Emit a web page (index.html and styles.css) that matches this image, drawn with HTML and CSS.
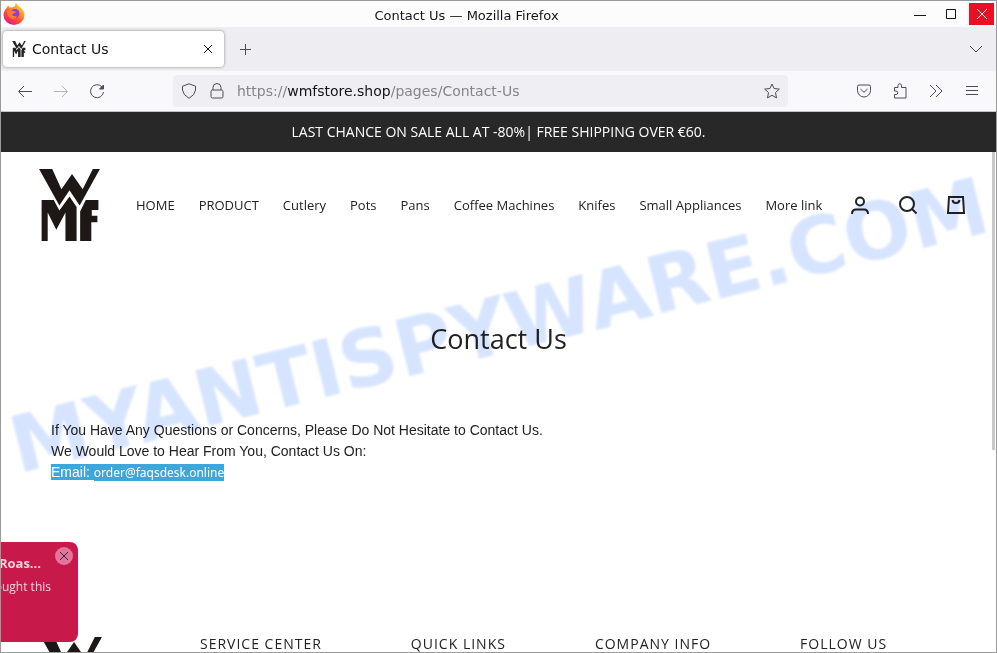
FILE: index.html
```html
<!DOCTYPE html>
<html lang="en">
<head>
<meta charset="UTF-8">
<meta name="viewport" content="width=device-width, initial-scale=1.0">
<title>Contact Us</title>
<link rel="stylesheet" href="styles.css">
</head>
<body>
    <svg width="0" height="0" class="sprite" aria-hidden="true">
        <symbol id="wmf" viewBox="0 0 60 71">
            <path d="M0 0H13L22 20 32.500 5 43 20 53 0H60L40 36 30 21 20 36Z"/>
            <path d="M2.500 30.500H14.500L20 41 30 27 37 37.500V71H26V43L17 60 8.500 43V71H2.500Z"/>
            <path d="M40.500 42L46 30.500H58.500V40.500H52V46H57.500V52.500H51.500V71H40.500Z"/>
        </symbol>
    </svg>

    <div class="titlebar">
        <svg class="firefox" viewBox="0 0 22 22">
            <defs>
                <linearGradient id="flame" x1="1" y1="0" x2="0.3" y2="1">
                    <stop offset="0" stop-color="#fff04a"/>
                    <stop offset="0.35" stop-color="#ffa52a"/>
                    <stop offset="0.7" stop-color="#ff4a3c"/>
                    <stop offset="1" stop-color="#e31587"/>
                </linearGradient>
            </defs>
            <path d="M4 4.500L5 2.500 6.500 4.500Q8 4 9 4.500L12 3Q12 1 13 0Q15 3 17.500 4.500Q21.500 8 21.500 12A10.500 10 0 0 1 .5 12Q.5 8 4 4.500Z" fill="url(#flame)"/>
            <circle cx="12" cy="10.500" r="4.500" fill="#8a3fd6"/>
            <path d="M4 8Q7 6 10 8Q13 8 13 9.500Q10 10 9 12Q11 14 14 12.500Q13 16 9 16Q4 14 4 8Z" fill="#ff7a2d"/>
        </svg>
        <span class="window-title">Contact Us — Mozilla Firefox</span>
        <div class="window-buttons">
            <button aria-label="Minimize"><svg viewBox="0 0 14 14"><path d="M1 8.500H13"/></svg></button>
            <button aria-label="Maximize"><svg viewBox="0 0 14 14"><path d="M2.500 2.500H11.500V11.500H2.500Z"/></svg></button>
            <button class="close" aria-label="Close"><svg viewBox="0 0 14 14"><path d="M2 2L12 12M12 2L2 12"/></svg></button>
        </div>
    </div>

    <div class="tabs">
        <div class="tab">
            <svg class="favicon"><use href="#wmf"/></svg>
            <span>Contact Us</span>
            <button aria-label="Close tab"><svg viewBox="0 0 16 16"><path d="M4 4L12 12M12 4L4 12"/></svg></button>
        </div>
        <button class="new-tab" aria-label="New tab"><svg viewBox="0 0 16 16"><path d="M8.500 3V14M3 8.500H14"/></svg></button>
        <button class="all-tabs" aria-label="List all tabs"><svg viewBox="0 0 16 16"><path d="M2 5L8 11L14 5"/></svg></button>
    </div>

    <div class="toolbar">
        <button aria-label="Back"><svg viewBox="0 0 16 16"><path d="M15 8.500H2M7 3L1.500 8.500L7 14"/></svg></button>
        <button class="disabled" aria-label="Forward"><svg viewBox="0 0 16 16"><path d="M1 8.500H14M9 3L14.500 8.500L9 14"/></svg></button>
        <button aria-label="Reload"><svg viewBox="0 0 16 16"><path d="M13 4A6.500 6.500 0 1 0 14.500 9"/><path class="solid" d="M14.500 2V6H10.500Z"/></svg></button>
        <div class="urlbar">
            <svg viewBox="0 0 16 16"><path d="M8 .8L14.500 3.200V7Q14 12 8 15.300Q2 12 1.500 7V3.200Z"/></svg>
            <svg viewBox="0 0 16 16"><path d="M4 7V4.500A4 4 0 0 1 12 4.500V7M3.500 7H12.500Q14 7 14 8.500V13.500Q14 15 12.500 15H3.500Q2 15 2 13.500V8.500Q2 7 3.500 7Z"/></svg>
            <span class="url">https://<b>wmfstore.shop</b>/pages/Contact-Us</span>
            <button aria-label="Bookmark"><svg viewBox="0 0 16 16"><path d="M8 1L10.100 5.500L15.300 6.100L11.500 9.600L12.500 14.900L8 12.300L3.500 14.900L4.500 9.600L.7 6.100L5.900 5.500Z"/></svg></button>
        </div>
        <button aria-label="Pocket"><svg viewBox="0 0 16 16"><path d="M3 2H13Q14.500 2 14.500 3.500V7.500A6.500 6.500 0 0 1 1.500 7.500V3.500Q1.500 2 3 2ZM4.500 6L8 9.300L11.500 6"/></svg></button>
        <button aria-label="Extensions"><svg viewBox="0 0 16 16"><path d="M2.500 4.500H6V2.500A1.700 1.700 0 0 1 9.500 2.500V4.500H14V15H2.500V11.500H4A1.700 1.700 0 0 0 4 8H2.500Z"/></svg></button>
        <button aria-label="More tools"><svg viewBox="0 0 16 16"><path d="M2 2L8 8L2 14M8 2L14 8L8 14"/></svg></button>
        <button aria-label="Menu"><svg viewBox="0 0 16 16"><path d="M2 3.500H14M2 7.500H14M2 11.500H14"/></svg></button>
    </div>

    <div class="viewport">
        <div class="announcement">LAST CHANCE ON SALE ALL AT -80%| FREE SHIPPING OVER €60.</div>

        <header>
            <a href="#" class="logo" aria-label="WMF"><svg><use href="#wmf"/></svg></a>
            <nav>
                <a href="#">HOME</a>
                <a href="#">PRODUCT</a>
                <a href="#">Cutlery</a>
                <a href="#">Pots</a>
                <a href="#">Pans</a>
                <a href="#">Coffee Machines</a>
                <a href="#">Knifes</a>
                <a href="#">Small Appliances</a>
                <a href="#">More link</a>
            </nav>
            <div class="actions">
                <a href="#" aria-label="Account"><svg viewBox="0 0 20 20"><circle cx="10" cy="6.500" r="4"/><path d="M2 19Q2 14.500 6 14.500H14Q18 14.500 18 19"/></svg></a>
                <a href="#" aria-label="Search"><svg viewBox="0 0 20 20"><circle cx="9" cy="9" r="7"/><path d="M14 14L18.500 18.500"/></svg></a>
                <a href="#" aria-label="Cart"><svg viewBox="0 0 20 20"><path d="M3 2H17L18 18H2ZM6.500 5Q7 8 10 8Q13 8 13.500 5"/></svg></a>
            </div>
        </header>

        <main>
            <h1>Contact Us</h1>
            <p>If You Have Any Questions or Concerns, Please Do Not Hesitate to Contact Us.</p>
            <p>We Would Love to Hear From You, Contact Us On:</p>
            <p><span class="selected">Email: </span><span class="selected email">order@faqsdesk.online</span></p>
        </main>

        <footer>
            <a href="#" class="logo" aria-label="WMF"><svg><use href="#wmf"/></svg></a>
            <h2>SERVICE CENTER</h2>
            <h2>QUICK LINKS</h2>
            <h2>COMPANY INFO</h2>
            <h2>FOLLOW US</h2>
        </footer>

        <div class="popup">
            <button aria-label="Close"><svg viewBox="0 0 16 16"><path d="M4 4L12 12M12 4L4 12"/></svg></button>
            <strong>Roas...</strong>
            <span>ought this</span>
        </div>
        <div class="scrollbar"></div>
        <div class="watermark">MYANTISPYWARE.COM</div>
    </div>
</body>
</html>
```
FILE: styles.css
```css
* {
    box-sizing: border-box;
}
body {
    margin: 0;
    height: 100vh;
    display: flex;
    flex-direction: column;
    overflow: hidden;
    border: 1px solid #9a9a9a;
    background: #fff;
    font-family: "DejaVu Sans", sans-serif;
    color: #15141a;
}
button {
    display: flex;
    align-items: center;
    justify-content: center;
    padding: 0;
    border: none;
    background: none;
    color: inherit;
}
a {
    color: inherit;
    text-decoration: none;
}
svg {
    flex-shrink: 0;
    fill: none;
    stroke: currentColor;
}
.sprite {
    position: absolute;
}

/* browser window */
.titlebar {
    display: grid;
    grid-template-columns: 1fr auto 1fr;
    align-items: center;
    height: 26px;
    flex-shrink: 0;
    padding: 0 2px;
    background: #fcfcfc;
    font-size: 13px;
}
.firefox {
    width: 22px;
    height: 22px;
    stroke: none;
}
.window-title {
    padding-top: 2px;
    padding-right: 64px;
}
.window-buttons {
    display: flex;
    justify-content: flex-end;
    gap: 6px;
}
.window-buttons button {
    width: 25px;
    height: 22px;
}
.window-buttons svg {
    width: 14px;
    height: 14px;
}
.window-buttons .close {
    background: #e81123;
    color: #fff;
}
.tabs {
    display: flex;
    align-items: center;
    height: 44px;
    flex-shrink: 0;
    padding: 0 2px;
    background: #eeeef2;
    color: #4c4b54;
}
.tabs svg,
.toolbar svg {
    width: 16px;
    height: 16px;
}
.tab {
    display: flex;
    align-items: center;
    gap: 5px;
    width: 221px;
    height: 36px;
    padding: 0 8px;
    border-radius: 4px;
    background: #fff;
    box-shadow: 0 0 3px rgba(0, 0, 0, 0.45);
    font-size: 14px;
    color: #15141a;
}
.tab .favicon {
    fill: #222;
    stroke: none;
}
.tab button {
    margin-left: auto;
}
.new-tab {
    width: 42px;
}
.all-tabs {
    width: 36px;
    margin-left: auto;
}
.toolbar {
    display: flex;
    align-items: center;
    height: 41px;
    flex-shrink: 0;
    padding: 0 6px;
    background: #f9f9fb;
    border-bottom: 1px solid #c4c4c8;
    color: #4c4b54;
}
.toolbar button {
    width: 36px;
    height: 32px;
}
.toolbar .disabled {
    color: #b4b4b8;
}
.solid {
    fill: currentColor;
}
.urlbar {
    display: flex;
    align-items: center;
    gap: 12px;
    flex: 1;
    height: 32px;
    margin: 0 58px;
    padding-left: 8px;
    border-radius: 4px;
    background: #efeff3;
}
.urlbar button {
    width: 32px;
    margin-left: auto;
}
.url {
    font-size: 14px;
    color: #84848a;
    white-space: nowrap;
}
.url b {
    font-weight: normal;
    color: #15141a;
}

/* shop page */
.viewport {
    position: relative;
    flex: 1;
    min-height: 0;
    overflow: hidden;
    font-family: "Open Sans", sans-serif;
    color: #222;
}
.announcement {
    padding: 10px;
    background: #282828;
    color: #fff;
    font-size: 14px;
    line-height: 20px;
    text-align: center;
}
header {
    display: flex;
    align-items: center;
    padding: 17px 30px 17px 38px;
}
.logo svg {
    display: block;
    width: 61px;
    height: 72px;
    fill: #1d1816;
    stroke: none;
}
nav {
    display: flex;
    gap: 24px;
    margin-left: 36px;
    font-size: 13px;
    line-height: 20px;
    white-space: nowrap;
}
.actions {
    display: flex;
    gap: 28px;
    margin-left: auto;
}
.actions svg {
    display: block;
    width: 20px;
    height: 20px;
    stroke-width: 2;
}
main {
    padding: 63px 50px 0;
}
h1 {
    margin: 0 0 63px;
    font-size: 27px;
    font-weight: normal;
    line-height: 36px;
    text-align: center;
}
p {
    margin: 0;
    font-family: "Liberation Sans", sans-serif;
    font-size: 14px;
    line-height: 21px;
}
.selected {
    background: #3ea6d8;
    color: #fff;
}
.email {
    font-family: "Noto Sans", sans-serif;
    font-size: 12px;
}
footer {
    display: flex;
    align-items: flex-start;
    gap: 89px;
    margin-top: 154px;
    padding: 0 40px;
}
footer .logo {
    width: 70px;
}
h2 {
    margin: 0;
    font-size: 14px;
    font-weight: normal;
    line-height: 14px;
    letter-spacing: 1px;
    white-space: nowrap;
}
.popup {
    position: absolute;
    left: 0;
    bottom: 10px;
    display: flex;
    flex-direction: column;
    align-items: flex-end;
    width: 77px;
    height: 100px;
    padding-top: 11px;
    overflow: hidden;
    border-radius: 0 8px 8px 0;
    background: #c8194b;
    color: #f8d3de;
    white-space: nowrap;
}
.popup strong {
    margin-right: 37px;
    font-size: 13px;
    line-height: 20px;
}
.popup span {
    margin-right: 27px;
    padding-top: 4px;
    font-size: 12px;
    line-height: 20px;
}
.popup button {
    position: absolute;
    top: 5px;
    right: 5px;
    width: 18px;
    height: 18px;
    border-radius: 50%;
    background: #e3759a;
    color: #40202c;
}
.popup svg {
    width: 16px;
    height: 16px;
}
.scrollbar {
    position: absolute;
    top: 40px;
    right: 1px;
    width: 3px;
    height: 298px;
    background: #c8c8c8;
}
.watermark {
    position: absolute;
    top: 169px;
    left: 50%;
    transform: translateX(-50%) rotate(-14deg);
    font-family: "DejaVu Sans", sans-serif;
    font-size: 79px;
    font-weight: bold;
    line-height: 90px;
    color: #d6e4ff;
    mix-blend-mode: multiply;
    filter: blur(1px);
    pointer-events: none;
}
```
